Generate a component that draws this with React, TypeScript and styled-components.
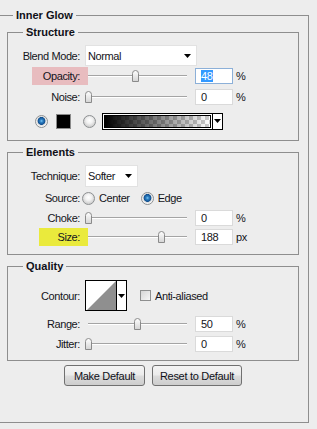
import React from 'react'
import styled, { createGlobalStyle } from 'styled-components'

const Global = createGlobalStyle`
  html, body { margin: 0; padding: 0; background: #ededed; }
  body { font-family: 'Liberation Sans', Arial, sans-serif; font-size: 11px; letter-spacing: -0.4px; color: #141420; }
  * { box-sizing: border-box; }
`

const Panel = styled.fieldset`
	margin: 9px 0 0 -10px;
	width: 319px;
	height: 414px;
	padding: 4px 9px 0 16px;
	border: 1px solid #8e8e8e;
	min-width: 0;
`

const Title = styled.legend<{ $indent: number }>`
	margin-left: ${p => p.$indent}px;
	padding: 0 3px;
	font-weight: bold;
	line-height: 13px;
	letter-spacing: 0;
	color: #101018;
`

const Group = styled.fieldset<{ $pad: string }>`
	margin: 0 0 5px;
	padding: ${p => p.$pad};
	border: 1px solid #8e8e8e;
	min-width: 0;
`

const Row = styled.div<{ $h: number; $mt?: number }>`
	display: grid;
	grid-template-columns: 80px 107px 38px auto;
	align-items: center;
	height: ${p => p.$h}px;
	margin-top: ${p => p.$mt ?? 0}px;
`

const Label = styled.span<{ $mark?: string; $w?: number }>`
	justify-self: end;
	width: ${p => (p.$w ? `${p.$w}px` : 'auto')};
	height: 18px;
	line-height: 18px;
	padding-right: 8px;
	text-align: right;
	background: ${p => p.$mark ?? 'transparent'};
	white-space: nowrap;
`

const Controls = styled.div<{ $shift?: number }>`
	grid-column: 2 / span 3;
	display: flex;
	align-items: center;
	margin-left: ${p => p.$shift ?? 0}px;
`

const Select = styled.div<{ $w: number; $h: number }>`
	width: ${p => p.$w}px;
	height: ${p => p.$h}px;
	margin-left: -3px;
	padding: 0 5px 0 2px;
	display: flex;
	align-items: center;
	justify-content: space-between;
	background: #fff;
	border: 1px solid #e2e2e2;
`

const Track = styled.div`
	position: relative;
	width: 99px;
	height: 2px;
	border-top: 1px solid #a4a4a4;
	border-bottom: 1px solid #fff;
`

const Thumb = styled.svg`
	position: absolute;
	top: -6px;
`

const Field = styled.div<{ $focus?: boolean }>`
	margin-left: 8px;
	width: 38px;
	height: 16px;
	padding-left: 5px;
	line-height: 14px;
	background: #fff;
	border: 1px solid ${p => (p.$focus ? '#8cb0d8' : '#dadada')};
`

const Picked = styled.span`
	background: #3399ff;
	color: #fff;
	padding-right: 1px;
`

const Unit = styled.span`
	padding-left: 3px;
`

const Radio = styled.span<{ $on?: boolean }>`
	flex: none;
	width: 13px;
	height: 13px;
	border-radius: 50%;
	border: 1px solid #8d9092;
	background: ${p =>
		p.$on
			? 'radial-gradient(circle at 50% 45%, #7cc8f4 0, #2d80c4 1.5px, #114f8f 3.6px, #d9dadb 4.2px, #f6f6f6 5.5px)'
			: 'radial-gradient(circle at 50% 40%, #ffffff 0, #f2f2f2 3px, #d2d2d2 6px)'};
`

const Caption = styled.span<{ $gap?: number }>`
	margin-left: ${p => p.$gap ?? 4}px;
	margin-right: 11px;
`

const ColorRow = styled.div`
	display: flex;
	align-items: center;
	height: 20px;
	margin-top: 4px;
	padding-left: 27px;
`

const Swatch = styled.span`
	width: 15px;
	height: 15px;
	margin: 0 12px 0 8px;
	background: #000;
	border: 1px solid #8a8a8a;
`

const Gradient = styled.div`
	margin-left: 6px;
	width: 121px;
	height: 17px;
	display: flex;
	border: 1px solid #000;
	background: #fff;
`

const Ramp = styled.div`
	flex: 1;
	margin: 1px;
	border: 1px solid #000;
	background: linear-gradient(to right, #000, rgba(0, 0, 0, 0)),
		repeating-conic-gradient(#cbcbcb 0 25%, #ffffff 0 50%) 0 0 / 8px 8px;
`

const Drop = styled.div`
	width: 10px;
	border-left: 1px solid #000;
	display: flex;
	align-items: center;
	justify-content: center;
`

const Contour = styled.div`
	margin-left: -3px;
	width: 42px;
	height: 31px;
	display: flex;
	border: 1px solid #000;
	background: #fff;
`

const Check = styled.span`
	width: 11px;
	height: 11px;
	margin-left: 13px;
	border: 1px solid #8e8f8f;
	background: linear-gradient(135deg, #d6d6d6, #f7f7f7);
`

const Buttons = styled.div`
	display: flex;
	justify-content: center;
	gap: 7px;
	margin-top: -1px;
`

const Button = styled.button<{ $w: number }>`
	width: ${p => p.$w}px;
	height: 21px;
	padding: 0;
	border: 1px solid #707070;
	border-radius: 3px;
	background: linear-gradient(#f4f4f4 0%, #ebebeb 48%, #dcdcdc 52%, #cdcdcd 100%);
	font: 11px 'Liberation Sans', Arial, sans-serif;
	letter-spacing: -0.3px;
	color: #101018;
`

const Arrow = () => (
	<svg width="7" height="4" viewBox="0 0 7 4">
		<path d="M0 0h7L3.5 4z" fill="#000" />
	</svg>
)

const Slider = ({ value }: { value: number }) => (
	<Track>
		<Thumb width="9" height="12" viewBox="0 0 9 12" style={{ left: Math.round(value * 97) - 4 }}>
			<defs>
				<linearGradient id="tg" x1="0" y1="0" x2="0" y2="1">
					<stop offset="0" stopColor="#ffffff" />
					<stop offset="1" stopColor="#d4d4d4" />
				</linearGradient>
			</defs>
			<path d="M1.5 3.5Q1.5 0.5 4.5 0.5Q7.5 0.5 7.5 3.5V11.5H1.5Z" fill="url(#tg)" stroke="#8a8a8a" />
		</Thumb>
	</Track>
)

interface ISliderField {
	label: string
	value: number
	max?: number
	unit?: string
	h: number
	mt?: number
	focus?: boolean
	mark?: string
	markWidth?: number
}

const SliderField = ({ label, value, max = 100, unit = '%', h, mt, focus, mark, markWidth }: ISliderField) => (
	<Row $h={h} $mt={mt}>
		<Label $mark={mark} $w={markWidth}>
			{label}
		</Label>
		<Controls>
			<Slider value={value / max} />
			<Field $focus={focus}>{focus ? <Picked>{value}</Picked> : value}</Field>
			<Unit>{unit}</Unit>
		</Controls>
	</Row>
)

const App = () => (
	<>
		<Global />
		<Panel>
			<Title $indent={6}>Inner Glow</Title>

			<Group $pad="6px 0 9px">
				<Title $indent={15}>Structure</Title>
				<Row $h={21}>
					<Label>Blend Mode:</Label>
					<Controls>
						<Select $w={112} $h={21}>
							Normal
							<Arrow />
						</Select>
					</Controls>
				</Row>
				<SliderField label="Opacity:" value={48} h={20} focus mark="#e8bcbf" markWidth={56} />
				<SliderField label="Noise:" value={0} h={21} />
				<ColorRow>
					<Radio $on />
					<Swatch />
					<Radio />
					<Gradient>
						<Ramp />
						<Drop>
							<Arrow />
						</Drop>
					</Gradient>
				</ColorRow>
			</Group>

			<Group $pad="6px 0 6px">
				<Title $indent={15}>Elements</Title>
				<Row $h={22}>
					<Label>Technique:</Label>
					<Controls>
						<Select $w={53} $h={22}>
							Softer
							<Arrow />
						</Select>
					</Controls>
				</Row>
				<Row $h={22}>
					<Label>Source:</Label>
					<Controls $shift={-6}>
						<Radio />
						<Caption>Center</Caption>
						<Radio $on />
						<Caption>Edge</Caption>
					</Controls>
				</Row>
				<SliderField label="Choke:" value={0} h={17} />
				<SliderField label="Size:" value={188} max={250} unit="px" h={22} mark="#eaea3c" markWidth={49} />
			</Group>

			<Group $pad="7px 0 6px">
				<Title $indent={15}>Quality</Title>
				<Row $h={31}>
					<Label>Contour:</Label>
					<Controls>
						<Contour>
							<svg width="30" height="29" viewBox="0 0 30 29">
								<path d="M1 29L30 0V29Z" fill="#8f8f8f" />
							</svg>
							<Drop>
								<Arrow />
							</Drop>
						</Contour>
						<Check />
						<Caption>Anti-aliased</Caption>
					</Controls>
				</Row>
				<SliderField label="Range:" value={50} h={20} mt={3} />
				<SliderField label="Jitter:" value={0} h={20} />
			</Group>

			<Buttons>
				<Button $w={81}>Make Default</Button>
				<Button $w={90}>Reset to Default</Button>
			</Buttons>
		</Panel>
	</>
)

export default App
